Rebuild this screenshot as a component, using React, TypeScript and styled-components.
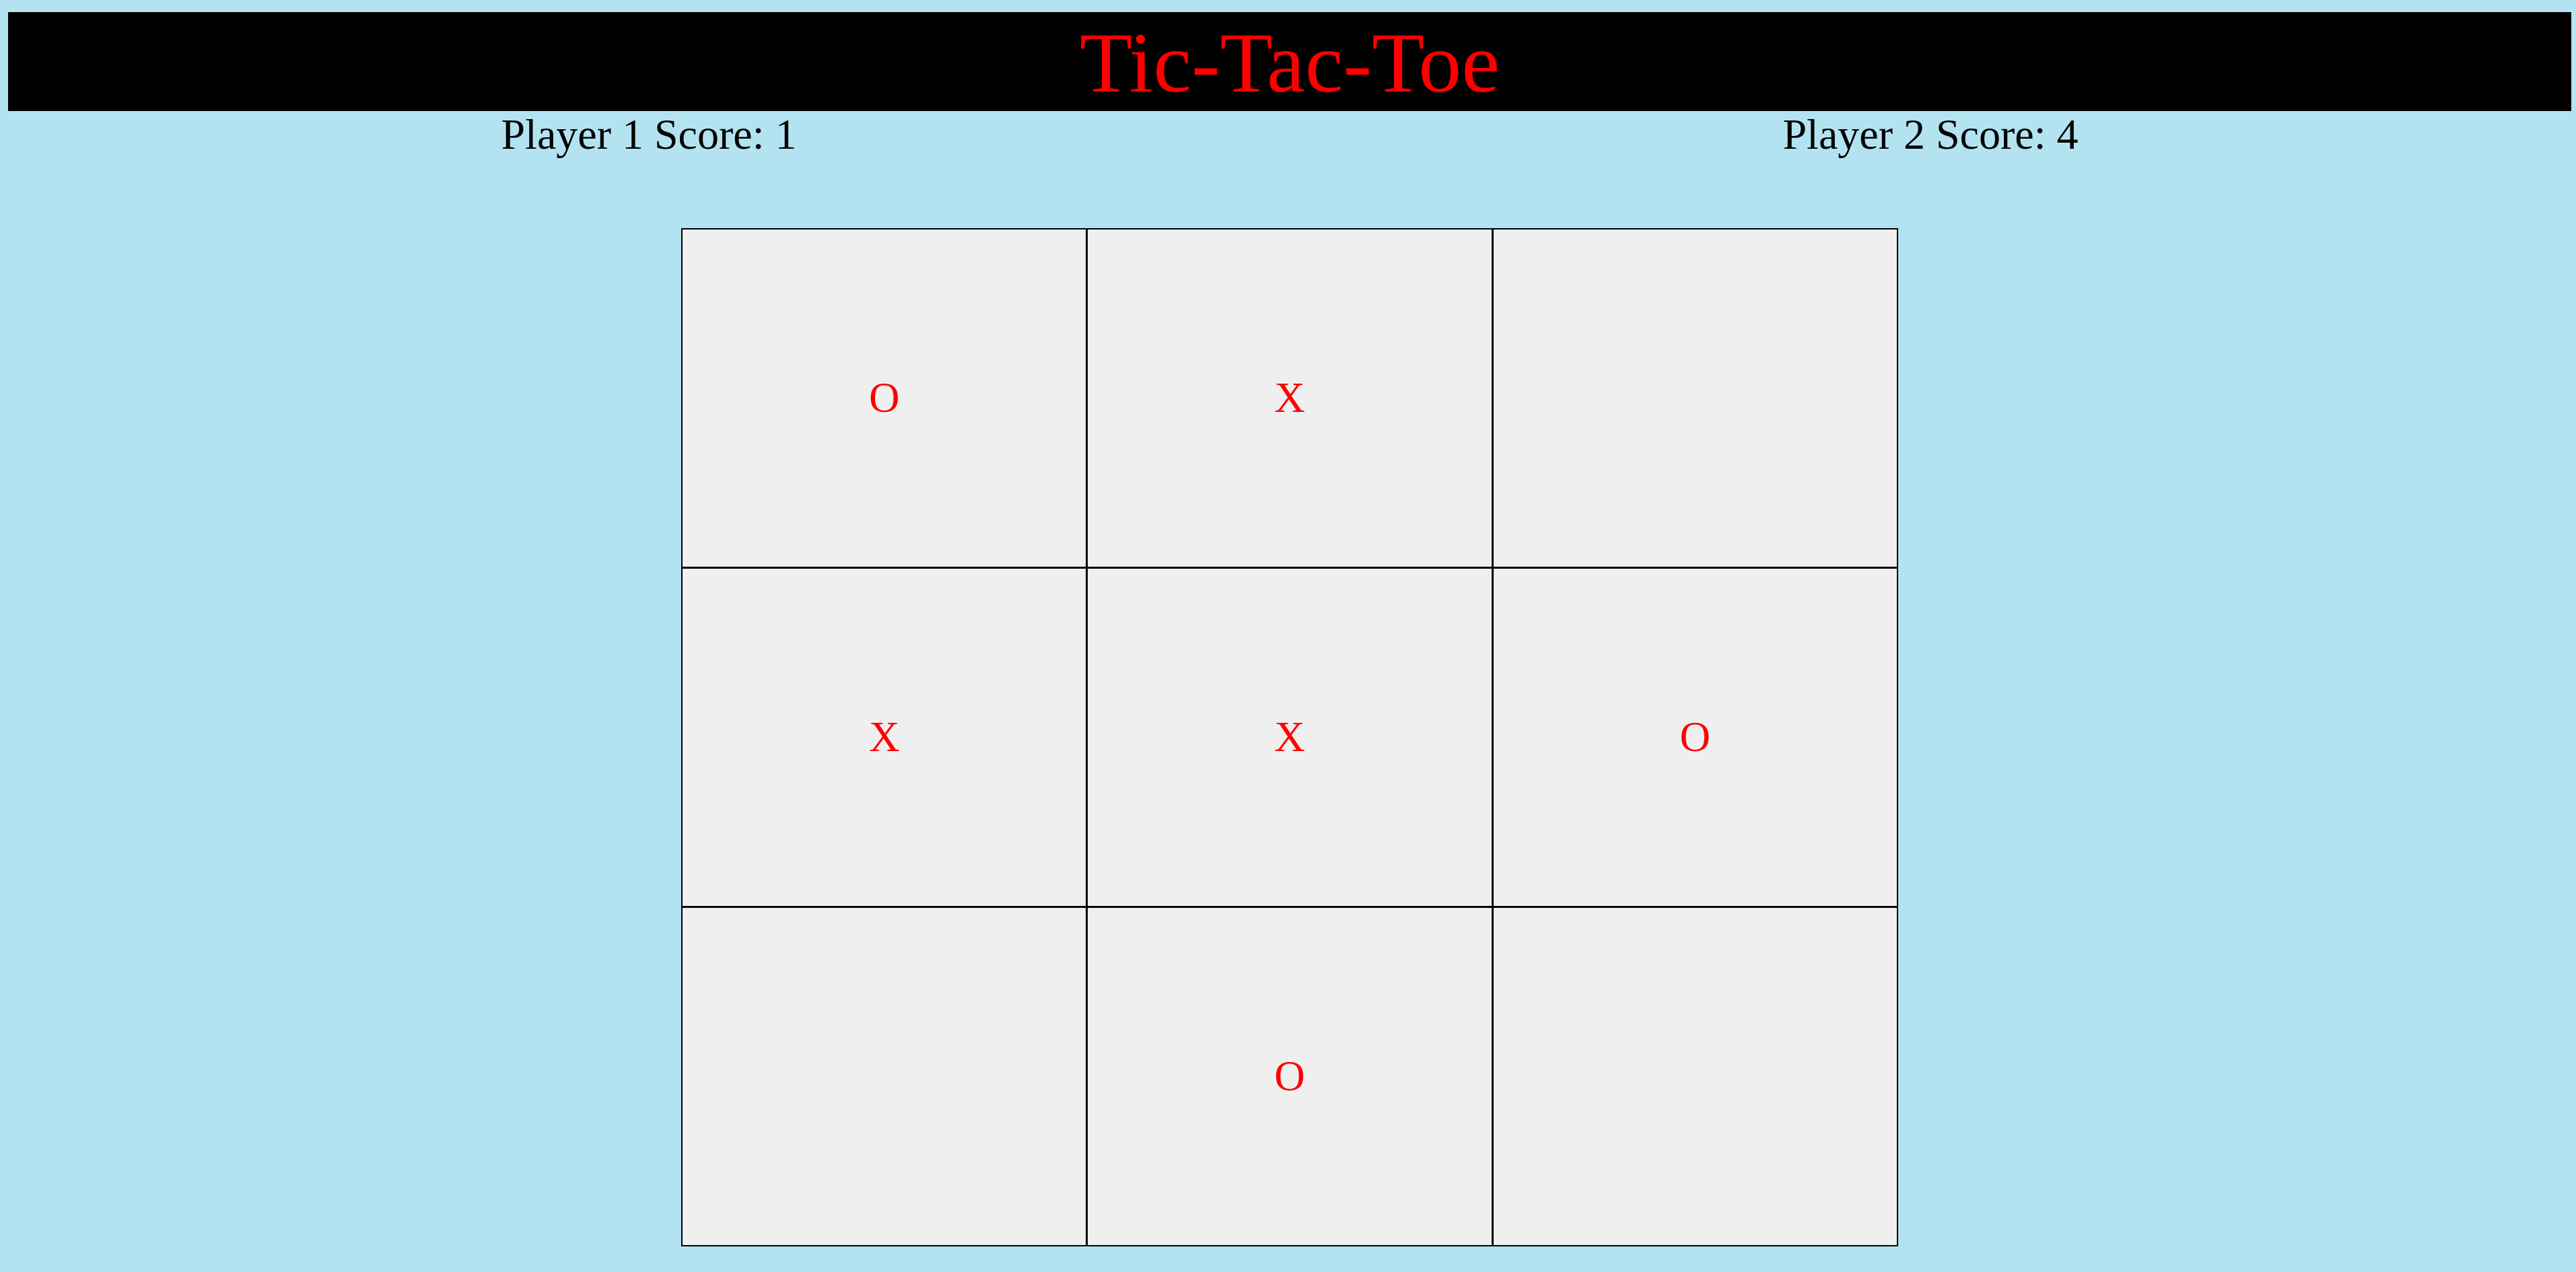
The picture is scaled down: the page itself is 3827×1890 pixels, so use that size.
import React, { useState } from "react";
import styled, { createGlobalStyle } from "styled-components";

const GlobalStyle = createGlobalStyle`
  html, body {
    margin: 0;
    padding: 0;
    background-color: #b3e3f0;
    font-family: "Liberation Serif", "Times New Roman", serif;
  }
`;

const PageContainer = styled.div`
  padding: 18px 7px 0 12px;
  min-height: 1872px;
`;

const Header = styled.h1`
  margin: 0;
  height: 147px;
  background-color: #000;
  color: #ff0000;
  font-size: 128px;
  font-weight: 400;
  line-height: 150px;
  text-align: center;
  overflow: hidden;
`;

const ScoreRow = styled.div`
  display: flex;
  font-size: 64px;
  line-height: 70px;
  color: #000;
`;

const Score = styled.div`
  flex: 1;
  text-align: center;
`;

const Board = styled.div`
  margin: 104px auto 0;
  width: 1808px;
  height: 1513px;
  box-sizing: border-box;
  display: grid;
  grid-template-columns: repeat(3, 1fr);
  grid-template-rows: repeat(3, 1fr);
  gap: 3px;
  padding: 2px;
  background-color: #000;
`;

const Cell = styled.button`
  display: flex;
  align-items: center;
  justify-content: center;
  margin: 0;
  padding: 0;
  border: none;
  background-color: #efefef;
  color: #ff0000;
  font-family: "Liberation Serif", "Times New Roman", serif;
  font-size: 63px;
  cursor: pointer;
`;

const initialBoard = ["O", "X", "", "X", "X", "O", "", "O", ""];

const App = () => {
  const [board, setBoard] = useState<string[]>(initialBoard);
  const [turn, setTurn] = useState("X");
  const [scores] = useState({ p1: 1, p2: 4 });

  const handleClick = (i: number) => {
    if (board[i]) return;
    const next = [...board];
    next[i] = turn;
    setBoard(next);
    setTurn(turn === "X" ? "O" : "X");
  };

  return (
    <>
      <GlobalStyle />
      <PageContainer>
        <Header>Tic-Tac-Toe</Header>
        <ScoreRow>
          <Score>Player 1 Score: {scores.p1}</Score>
          <Score>Player 2 Score: {scores.p2}</Score>
        </ScoreRow>
        <Board>
          {board.map((value, i) => (
            <Cell key={i} onClick={() => handleClick(i)}>
              {value}
            </Cell>
          ))}
        </Board>
      </PageContainer>
    </>
  );
};

export default App;
